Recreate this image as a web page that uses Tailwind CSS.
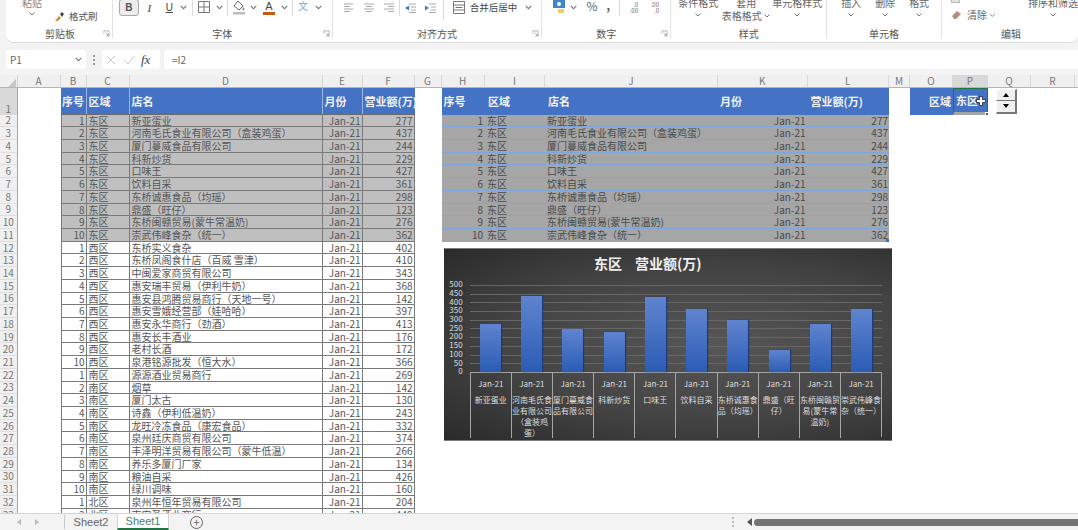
<!DOCTYPE html>
<html lang="zh-CN">
  <head>
    <meta charset="UTF-8" />
    <title>Sheet1</title>
    <script src="https://cdn.jsdelivr.net/npm/@tailwindcss/browser@4"></script>
  </head>
  <body class="bg-[#f3f3f3]">
    <svg class="hidden">
      <symbol id="chev" viewBox="0 0 8 8"><path d="M1.5 2.5 4 5l2.5-2.5" fill="none" stroke="#777" stroke-width="1" /></symbol>
      <symbol id="launch" viewBox="0 0 8 8"><path d="M1 4V1h6v6H4M3 3l3 3M6 4v2H4" fill="none" stroke="#999" stroke-width=".8" /></symbol>
    </svg>

    <div class="w-[1078px] h-[530px] overflow-hidden flex flex-col font-['Noto_Sans_CJK_SC','Liberation_Sans',sans-serif] text-[#555]">
      <!-- ribbon -->
      <div class="ml-[6px] h-[43px] shrink-0 flex bg-white rounded-b-lg border-b border-[#dcdcdc] overflow-hidden text-[10px] leading-[12px]">
        <div class="w-[107px] h-[38px] border-r border-[#e2e2e2] flex flex-col">
          <div class="h-[28px] shrink-0 flex">
            <div class="w-[36px] ml-[8px] flex flex-col items-center -mt-[3px] text-[#888]">
              <span class="w-[20px] text-center">粘贴</span>
              <svg class="w-[8px] h-[8px] mt-[1px]"><use href="#chev" /></svg>
            </div>
            <div class="flex items-center h-[12px] mt-[10px] ml-[4px] text-[#555]">
              <svg class="w-[11px] h-[11px] mr-[4px]" viewBox="0 0 11 11"><path d="M1 10 5 5l2 2-3 3z" fill="#c9942b" /><path d="m6 3 2-2 2 2-2 3z" fill="#444" /></svg>
              <span class="text-[9.500px]">格式刷</span>
            </div>
          </div>
          <div class="flex items-center justify-center text-[10px] pl-[2px] relative">剪贴板<svg class="absolute right-[2px] top-[2px] w-[7px] h-[7px]"><use href="#launch" /></svg></div>
        </div>

        <div class="w-[220px] h-[38px] border-r border-[#e2e2e2] flex flex-col">
          <div class="h-[28px] shrink-0 flex items-start pl-[6px]">
            <div class="w-[20px] h-[17px] -mt-[1px] bg-[#ececec] border border-[#a8a8a8] rounded-[3px] flex items-center justify-center font-bold text-[10px] font-['Liberation_Sans']">B</div>
            <div class="w-[21px] h-[16px] flex items-center justify-center italic text-[11px] font-['Liberation_Serif'] text-[#444]">I</div>
            <div class="w-[19px] h-[16px] flex items-center justify-center underline text-[10px] font-['Liberation_Sans'] text-[#444]">U</div>
            <svg class="w-[9px] h-[9px] mt-[3px]"><use href="#chev" /></svg>
            <div class="w-px h-[16px] bg-[#dcdcdc] ml-[4px]"></div>
            <svg class="w-[12px] h-[12px] ml-[5px] mt-[1px]" viewBox="0 0 12 12"><path d="M.5.5h11v11H.5zM6 .5v11M.5 6h11" fill="none" stroke="#777" /></svg>
            <svg class="w-[9px] h-[9px] ml-[5px] mt-[3px]"><use href="#chev" /></svg>
            <div class="w-px h-[16px] bg-[#dcdcdc] ml-[3px]"></div>
            <svg class="w-[14px] h-[15px] ml-[4px]" viewBox="0 0 14 15"><path d="m6 1 5 5-4 4-5-4z" fill="none" stroke="#666" /><path d="M11 7c1 1 2 2 1 3s-2 0-1-3z" fill="#3f8fd0" /><path d="M1 12h12v2.500H1z" fill="#bdbdbd" /></svg>
            <svg class="w-[9px] h-[9px] ml-[3px] mt-[3px]"><use href="#chev" /></svg>
            <div class="w-[12px] ml-[5px] flex flex-col items-center">
              <span class="font-['Liberation_Sans'] text-[11px] leading-[10px] text-[#444] mt-[1px]">A</span>
              <span class="w-[12px] h-[3px] bg-[#c55a11] mt-[1px]"></span>
            </div>
            <svg class="w-[9px] h-[9px] ml-[5px] mt-[3px]"><use href="#chev" /></svg>
            <div class="w-px h-[16px] bg-[#dcdcdc] ml-[3px]"></div>
            <span class="w-[12px] ml-[5px] text-[10px] text-[#7aa6cf]">文</span>
            <svg class="w-[9px] h-[9px] ml-[4px] mt-[3px]"><use href="#chev" /></svg>
          </div>
          <div class="flex justify-center text-[10px] relative">字体<svg class="absolute right-[2px] top-[2px] w-[7px] h-[7px]"><use href="#launch" /></svg></div>
        </div>

        <div class="w-[210px] h-[38px] border-r border-[#e2e2e2] flex flex-col">
          <div class="h-[28px] shrink-0 flex items-start pl-[11px]">
            <svg class="w-[10px] h-[9px] mt-[3px]" viewBox="0 0 10 9"><path d="M0 1h9M0 3.500h6M0 6h9M0 8.500h6" stroke="#aaa" /></svg>
            <svg class="w-[10px] h-[9px] ml-[10px] mt-[3px]" viewBox="0 0 10 9"><path d="M0 1h10M2 3.500h6M0 6h10M2 8.500h6" stroke="#aaa" /></svg>
            <svg class="w-[10px] h-[9px] ml-[10px] mt-[3px]" viewBox="0 0 10 9"><path d="M0 1h10M4 3.500h6M0 6h10M4 8.500h6" stroke="#aaa" /></svg>
            <div class="w-px h-[16px] bg-[#dcdcdc] ml-[5px]"></div>
            <svg class="w-[12px] h-[10px] ml-[4px] mt-[3px]" viewBox="0 0 12 10"><path d="M5 1h7M7 4h5M7 7h5M5 9.500h7" stroke="#aaa" /><path d="M5 2.500v5L1 5z" fill="#3a7fc0" /></svg>
            <svg class="w-[12px] h-[10px] ml-[8px] mt-[3px]" viewBox="0 0 12 10"><path d="M5 1h7M7 4h5M7 7h5M5 9.500h7" stroke="#aaa" /><path d="M1 2.500v5L5 5z" fill="#3a7fc0" /></svg>
            <div class="w-px h-[20px] bg-[#dcdcdc] ml-[7px]"></div>
            <svg class="w-[12px] h-[13px] ml-[9px] mt-[1px]" viewBox="0 0 12 13"><path d="M.5.5h11v12H.5zM.5 4h11M.5 9h11" fill="none" stroke="#777" /><path d="M2.500 6.500h7" stroke="#3a7fc0" /></svg>
            <span class="ml-[5px] mt-[1px] text-[9.500px] text-[#444] whitespace-nowrap">合并后居中</span>
            <svg class="w-[9px] h-[9px] ml-[7px] mt-[3px]"><use href="#chev" /></svg>
          </div>
          <div class="flex justify-center text-[10px] relative">对齐方式<svg class="absolute right-[2px] top-[2px] w-[7px] h-[7px]"><use href="#launch" /></svg></div>
        </div>

        <div class="w-[129px] h-[38px] border-r border-[#e2e2e2] flex flex-col">
          <div class="h-[28px] shrink-0 flex items-start pl-[11px]">
            <svg class="w-[12px] h-[14px]" viewBox="0 0 12 14"><path d="M0 0h12v8H0z" fill="#3f86c6" /><circle cx="6" cy="4" r="2" fill="#fff" /><path d="M5 9h6v4H5z" fill="#f0cc6e" /></svg>
            <svg class="w-[9px] h-[9px] ml-[4px] mt-[3px]"><use href="#chev" /></svg>
            <span class="ml-[8px] text-[12px] text-[#666] w-[10px]">%</span>
            <span class="ml-[10px] text-[11px] font-bold text-[#555] -mt-[1px]">,</span>
            <div class="w-px h-[16px] bg-[#dcdcdc] ml-[9px]"></div>
            <div class="ml-[4px] w-[14px] text-[6px] leading-[6px] text-[#666] mt-[2px] text-right">.0<br />.00</div>
            <div class="ml-[7px] w-[14px] text-[6px] leading-[6px] text-[#666] mt-[2px] text-right">.00<br />.0</div>
          </div>
          <div class="flex justify-center text-[10px] relative">数字<svg class="absolute right-[2px] top-[2px] w-[7px] h-[7px]"><use href="#launch" /></svg></div>
        </div>

        <div class="w-[156px] h-[38px] border-r border-[#e2e2e2] flex flex-col">
          <div class="h-[28px] shrink-0 flex items-start pl-[7px] text-[#666] -mt-[3px]">
            <div class="w-[40px] flex flex-col items-center"><span class="whitespace-nowrap">条件格式</span><svg class="w-[8px] h-[8px] mt-[2px]"><use href="#chev" /></svg></div>
            <div class="w-[50px] ml-[3px] flex flex-col items-center"><span>套用</span><span class="mt-[1px] flex items-center whitespace-nowrap">表格格式<svg class="w-[8px] h-[8px] ml-[1px]"><use href="#chev" /></svg></span></div>
            <div class="w-[50px] ml-[1px] flex flex-col items-center"><span class="whitespace-nowrap">单元格样式</span><svg class="w-[8px] h-[8px] mt-[2px]"><use href="#chev" /></svg></div>
          </div>
          <div class="flex justify-center text-[10px] mt-[3px]">样式</div>
        </div>

        <div class="w-[115px] h-[38px] border-r border-[#e2e2e2] flex flex-col">
          <div class="h-[28px] shrink-0 flex items-start pl-[14px] gap-[14px] text-[#666] -mt-[3px]">
            <div class="w-[20px] flex flex-col items-center"><span>插入</span><svg class="w-[8px] h-[8px] mt-[2px]"><use href="#chev" /></svg></div>
            <div class="w-[20px] flex flex-col items-center"><span>删除</span><svg class="w-[8px] h-[8px] mt-[2px]"><use href="#chev" /></svg></div>
            <div class="w-[20px] flex flex-col items-center"><span>格式</span><svg class="w-[8px] h-[8px] mt-[2px]"><use href="#chev" /></svg></div>
          </div>
          <div class="flex justify-center text-[10px] mt-[3px]">单元格</div>
        </div>

        <div class="flex-1 h-[38px] flex flex-col">
          <div class="h-[28px] shrink-0 flex items-start text-[#666] -mt-[3px]">
            <div class="w-[62px] pl-[9px] flex flex-col">
              <span class="w-[9px] h-[6px] bg-[#e3e3e3] border border-[#bbb]"></span>
              <div class="flex items-center mt-[6px]">
                <svg class="w-[11px] h-[10px] mr-[5px]" viewBox="0 0 11 10"><path d="m1 6 5-5 4 3-5 5H3z" fill="#b98a80" /></svg>
                <span>清除</span>
                <svg class="w-[7px] h-[7px] ml-[2px]"><use href="#chev" /></svg>
              </div>
            </div>
            <div class="w-[50px] ml-[24px] flex flex-col items-center"><span class="whitespace-nowrap">排序和筛选</span><svg class="w-[8px] h-[8px] mt-[2px]"><use href="#chev" /></svg></div>
          </div>
          <div class="flex justify-center text-[10px] mt-[3px] pl-[2px]">编辑</div>
        </div>
      </div>

      <!-- formula bar -->
      <div class="mt-[7px] h-[19px] shrink-0 flex text-[10px] text-[#666]">
        <div class="ml-[6px] w-[80px] bg-white rounded-[3px] flex items-center justify-between pl-[4px] pr-[3px]">
          <span>P1</span>
          <svg class="w-[9px] h-[9px]"><use href="#chev" /></svg>
        </div>
        <div class="w-[16px] flex flex-col items-center justify-center gap-[2px]">
          <span class="w-[2px] h-[2px] bg-[#999]"></span><span class="w-[2px] h-[2px] bg-[#999]"></span><span class="w-[2px] h-[2px] bg-[#999]"></span>
        </div>
        <div class="w-[58px] bg-white rounded-[3px] flex items-center pl-[4px]">
          <svg class="w-[10px] h-[10px]" viewBox="0 0 10 10"><path d="m1 1 8 8M9 1 1 9" stroke="#ccc" /></svg>
          <svg class="w-[12px] h-[10px] ml-[7px]" viewBox="0 0 12 10"><path d="m1 5 4 4 6-8" fill="none" stroke="#ccc" /></svg>
          <span class="ml-[6px] italic text-[13px] text-[#444] font-['Liberation_Serif']">fx</span>
        </div>
        <div class="ml-[4px] flex-1 bg-white rounded-l-[3px] flex items-center pl-[8px]">=I2</div>
      </div>

      <!-- column letters -->
      <div class="mt-[6px] h-[12.5px] shrink-0 flex text-[10px] leading-[12px] text-[#777] border-b border-[#b5b5b5] bg-[#f0f0f0]">
        <div class="w-[17.5px] flex items-end justify-end border-r border-[#d4d4d4]"><span class="w-0 h-0 border-l-[8px] border-l-transparent border-b-[8px] border-b-[#c8c8c8] mr-[1px]"></span></div>
        <div class="w-[43px] text-center border-r border-[#d8d8d8]">A</div>
        <div class="w-[26px] text-center border-r border-[#d8d8d8]">B</div>
        <div class="w-[43px] text-center border-r border-[#d8d8d8]">C</div>
        <div class="w-[193px] text-center border-r border-[#d8d8d8]">D</div>
        <div class="w-[40px] text-center border-r border-[#d8d8d8]">E</div>
        <div class="w-[52px] text-center border-r border-[#d8d8d8]">F</div>
        <div class="w-[27px] text-center border-r border-[#d8d8d8]">G</div>
        <div class="w-[43.500px] text-center border-r border-[#d8d8d8]">H</div>
        <div class="w-[60px] text-center border-r border-[#d8d8d8]">I</div>
        <div class="w-[173px] text-center border-r border-[#d8d8d8]">J</div>
        <div class="w-[89.500px] text-center border-r border-[#d8d8d8]">K</div>
        <div class="w-[81.500px] text-center border-r border-[#d8d8d8]">L</div>
        <div class="w-[21px] text-center border-r border-[#d8d8d8]">M</div>
        <div class="w-[43px] text-center border-r border-[#d8d8d8]">O</div>
        <div class="w-[35px] text-center border-r border-[#d8d8d8] bg-[#d9d9d9]">P</div>
        <div class="w-[43px] text-center border-r border-[#d8d8d8]">Q</div>
        <div class="w-[44px] text-center border-r border-[#d8d8d8]">R</div>
      </div>

      <!-- sheet -->
      <div class="flex-1 min-h-0 flex bg-white overflow-hidden text-[10px] leading-[12px] text-[#555]">
        <div id="rowNums" class="w-[17.500px] shrink-0 bg-[#f0f0f0] border-r border-[#a8a8a8] text-[#777]"></div>
        <div class="w-[43px] shrink-0"></div>

        <div class="w-[354px] shrink-0">
          <div class="h-[27px] grid grid-cols-[26px_43px_193px_40px_52px] bg-[#4472c4] text-[#f2f2f2] font-bold text-[11px] border-b border-[#6b6b6b]">
            <div class="flex items-center justify-center border-r border-[#9db6e0] whitespace-nowrap overflow-hidden">序号</div>
            <div class="flex items-center pl-[2px] border-r border-[#9db6e0]">区域</div>
            <div class="flex items-center pl-[2px] border-r border-[#9db6e0]">店名</div>
            <div class="flex items-center pl-[2px] border-r border-[#9db6e0]">月份</div>
            <div class="flex items-center pl-[2px] whitespace-nowrap overflow-hidden">营业额(万)</div>
          </div>
          <div id="leftRows"></div>
        </div>

        <div class="w-[27px] shrink-0"></div>

        <div class="w-[447.500px] shrink-0">
          <div class="h-[27px] grid grid-cols-[43.500px_60px_173px_89.500px_81.500px] bg-[#4472c4] text-[#f2f2f2] font-bold text-[11px]">
            <div class="flex items-center pl-[2px]">序号</div>
            <div class="flex items-center pl-[3px]">区域</div>
            <div class="flex items-center pl-[3px]">店名</div>
            <div class="flex items-center pl-[2px]">月份</div>
            <div class="flex items-center pl-[3px]">营业额(万)</div>
          </div>
          <div id="rightRows" class="relative">
            <span class="absolute right-0 bottom-0 w-[3px] h-[3px] bg-[#3b6fc4]"></span>
          </div>

          <!-- chart -->
          <div class="mt-[6px] ml-[2.500px] w-[447.500px] h-[193.500px] border-t border-b border-[#7d7d7d] bg-[radial-gradient(ellipse_at_60%_50%,#565656_0%,#444444_55%,#2a2a2a_100%)] text-[#dedede]">
            <div class="h-[36px] flex justify-center items-center text-[14px] font-bold text-[#f0f0f0] pb-[8px] pr-[40px]"><span>东区</span><span class="ml-[13px]">营业额(万)</span></div>
            <div class="flex">
              <div id="yAxis" class="w-[18.700px] -mt-[4.350px] text-[8px] text-right"></div>
              <div class="w-[412.500px] ml-[7px]">
                <div id="bars" class="h-[87px] grid grid-cols-10 items-end px-0 bg-[repeating-linear-gradient(to_bottom,#666666_0,#666666_1px,transparent_1px,transparent_8.700px)]"></div>
                <div id="cats" class="h-[65px] grid grid-cols-10 border-t border-r border-[#a5a5a5] text-[8px] leading-[11px]"></div>
              </div>
            </div>
          </div>
        </div>

        <div class="w-[21px] shrink-0"></div>

        <div class="w-[78px] h-[27px] shrink-0 flex bg-[#4472c4] text-[#f2f2f2] font-bold text-[11px]">
          <div class="w-[43px] flex items-center justify-end pr-[2px]">区域</div>
          <div class="w-[35px] relative flex items-center pl-[2px] border border-[#217346] border-b-[3px] border-b-[#a6a6a6]">
            东区
            <svg class="absolute right-[1px] top-[7px] w-[10px] h-[10px]" viewBox="0 0 10 10"><path d="M3.500.5h3v3h3v3h-3v3h-3v-3h-3v-3h3z" fill="#fff" stroke="#222" stroke-width=".8" /></svg>
            <span class="absolute -right-[2px] -bottom-[4px] w-[4px] h-[4px] bg-[#217346] border border-white"></span>
          </div>
        </div>

        <div class="ml-[8px] w-[21px] shrink-0 flex flex-col mt-[1px]">
          <div class="h-[12px] bg-[#f0f0f0] border-t border-l border-white border-r-2 border-r-[#777] border-b border-b-[#777] flex items-center justify-center"><span class="w-0 h-0 border-l-[3.500px] border-r-[3.500px] border-b-[4px] border-l-transparent border-r-transparent border-b-black"></span></div>
          <div class="h-[13px] bg-[#f0f0f0] border-l border-white border-r-2 border-r-[#777] border-b-2 border-b-[#777] flex items-center justify-center"><span class="w-0 h-0 border-l-[3.500px] border-r-[3.500px] border-t-[4px] border-l-transparent border-r-transparent border-t-black"></span></div>
        </div>
      </div>

      <!-- sheet tabs -->
      <div class="h-[17px] shrink-0 flex items-stretch bg-[#f3f3f3] border-t border-[#d4d4d4] text-[11px] text-[#666] leading-[14px]">
        <div class="w-[65px] flex items-center pl-[17px] gap-[14px] border-r border-[#c8c8c8] my-[1px]">
          <span class="w-0 h-0 border-y-[3px] border-y-transparent border-r-[4px] border-r-[#bbb]"></span>
          <span class="w-0 h-0 border-y-[3px] border-y-transparent border-l-[4px] border-l-[#bbb]"></span>
        </div>
        <div class="w-[52px] flex items-center justify-center font-['Liberation_Sans']">Sheet2</div>
        <div class="w-[52px] flex items-center justify-center font-['Liberation_Sans'] bg-white border-b-2 border-[#217346] text-[#4d7f68] border-x border-x-[#d4d4d4]">Sheet1</div>
        <div class="ml-[21px] w-[13px] h-[13px] mt-[2px] rounded-full border border-[#666] flex items-center justify-center text-[11px] leading-none">+</div>
        <div class="ml-[527px] flex items-center gap-[2px] flex-col justify-center w-[5px]">
          <span class="w-[2px] h-[2px] bg-[#bbb]"></span><span class="w-[2px] h-[2px] bg-[#bbb]"></span><span class="w-[2px] h-[2px] bg-[#bbb]"></span>
        </div>
        <div class="flex-1 flex items-center pl-[12px]">
          <span class="w-0 h-0 border-y-[4px] border-y-transparent border-r-[5px] border-r-[#555]"></span>
          <span class="ml-[2px] flex-1 h-[7px] bg-[#737373] rounded-l-full"></span>
        </div>
      </div>
    </div>

    <script>
      const rows = [
        [1, "东区", "新亚蛋业", 277], [2, "东区", "河南毛氏食业有限公司（盒装鸡蛋）", 437],
        [3, "东区", "厦门蔓威食品有限公司", 244], [4, "东区", "科新炒货", 229],
        [5, "东区", "口味王", 427], [6, "东区", "饮料自采", 361],
        [7, "东区", "东桥诚惠食品（均瑶）", 298], [8, "东区", "鼎盛（旺仔）", 123],
        [9, "东区", "东桥闽赣贸易(蒙牛常温奶)", 276], [10, "东区", "崇武伟峰食杂（统一）", 362],
        [1, "西区", "东桥实义食杂", 402], [2, "西区", "东桥凤阁食什店（百威 雪津）", 410],
        [3, "西区", "中闽爱家商贸有限公司", 343], [4, "西区", "惠安瑞丰贸易（伊利牛奶）", 368],
        [5, "西区", "惠安县鸿腾贸易商行（天地一号）", 142], [6, "西区", "惠安雪娥经营部（娃哈哈）", 397],
        [7, "西区", "惠安永华商行（劲酒）", 413], [8, "西区", "惠安长丰酒业", 176],
        [9, "西区", "老村长酒", 172], [10, "西区", "泉港铭源批发（恒大水）", 366],
        [1, "南区", "源源酒业贸易商行", 269], [2, "南区", "烟草", 142],
        [3, "南区", "厦门太古", 130], [4, "南区", "诗鑫（伊利低温奶）", 243],
        [5, "南区", "龙旺冷冻食品（康宏食品）", 332], [6, "南区", "泉州廷庆商贸有限公司", 374],
        [7, "南区", "丰泽明洋贸易有限公司（蒙牛低温）", 266], [8, "南区", "养乐多厦门厂家", 134],
        [9, "南区", "粮油自采", 426], [10, "南区", "绿川调味", 160],
        [1, "北区", "泉州年恒年贸易有限公司", 204], [2, "北区", "南安圣酒业商行", 449],
      ];

      document.getElementById("rowNums").innerHTML =
        `<div class="h-[27px] bg-[#d9d9d9] flex items-end justify-center">1</div>` +
        rows.map((_, i) => `<div class="h-[12.730px] flex items-center justify-center border-b border-[#dedede]">${i + 2}</div>`).join("");

      document.getElementById("leftRows").innerHTML = rows
        .map((r, i) => {
          const bg = i < 10 ? "bg-[#bfbfbf]" : "bg-white";
          return `<div class="h-[12.730px] grid grid-cols-[26px_43px_193px_40px_52px] border-b border-[#7a7a7a] ${bg}">
            <div class="text-right pr-[1px] border-l border-r border-[#7a7a7a]">${r[0]}</div>
            <div class="pl-[2px] border-r border-[#7a7a7a]">${r[1]}</div>
            <div class="pl-[2px] whitespace-nowrap overflow-hidden border-r border-[#7a7a7a]">${r[2]}</div>
            <div class="text-right pr-[1px] border-r border-[#7a7a7a]">Jan-21</div>
            <div class="text-right pr-[1px] border-r border-[#7a7a7a]">${r[3]}</div>
          </div>`;
        })
        .join("");

      const east = rows.slice(0, 10);
      document.getElementById("rightRows").insertAdjacentHTML(
        "afterbegin",
        east
          .map(
            (r) => `<div class="h-[12.730px] grid grid-cols-[43.500px_60px_173px_89.500px_81.500px] bg-[#a6a6a6] border-b border-[#7fa6dc] text-[#4a4a4a]">
            <div class="text-right pr-[2px]">${r[0]}</div>
            <div class="pl-[2px]">${r[1]}</div>
            <div class="pl-[2px] whitespace-nowrap">${r[2]}</div>
            <div class="text-right pr-[2px]">Jan-21</div>
            <div class="text-right pr-[1px]">${r[3]}</div>
          </div>`
          )
          .join("")
      );

      document.getElementById("yAxis").innerHTML = [500, 450, 400, 350, 300, 250, 200, 150, 100, 50, 0]
        .map((v) => `<div class="h-[8.700px] leading-[8.700px]">${v}</div>`)
        .join("");

      document.getElementById("bars").innerHTML = east
        .map(
          (r) => `<div class="flex justify-center"><div class="w-[21px] bg-gradient-to-b from-[#5f84cf] to-[#2a5cb5] shadow-[1px_0_1px_#1d3a78]" style="height:${r[3] * 0.174}px"></div></div>`
        )
        .join("");

      document.getElementById("cats").innerHTML = east
        .map(
          (r) => `<div class="border-l border-[#a5a5a5] text-center pt-[5px]"><div>Jan-21</div><div class="mt-[5px] break-all">${r[2]}</div></div>`
        )
        .join("");
    </script>
  </body>
</html>
